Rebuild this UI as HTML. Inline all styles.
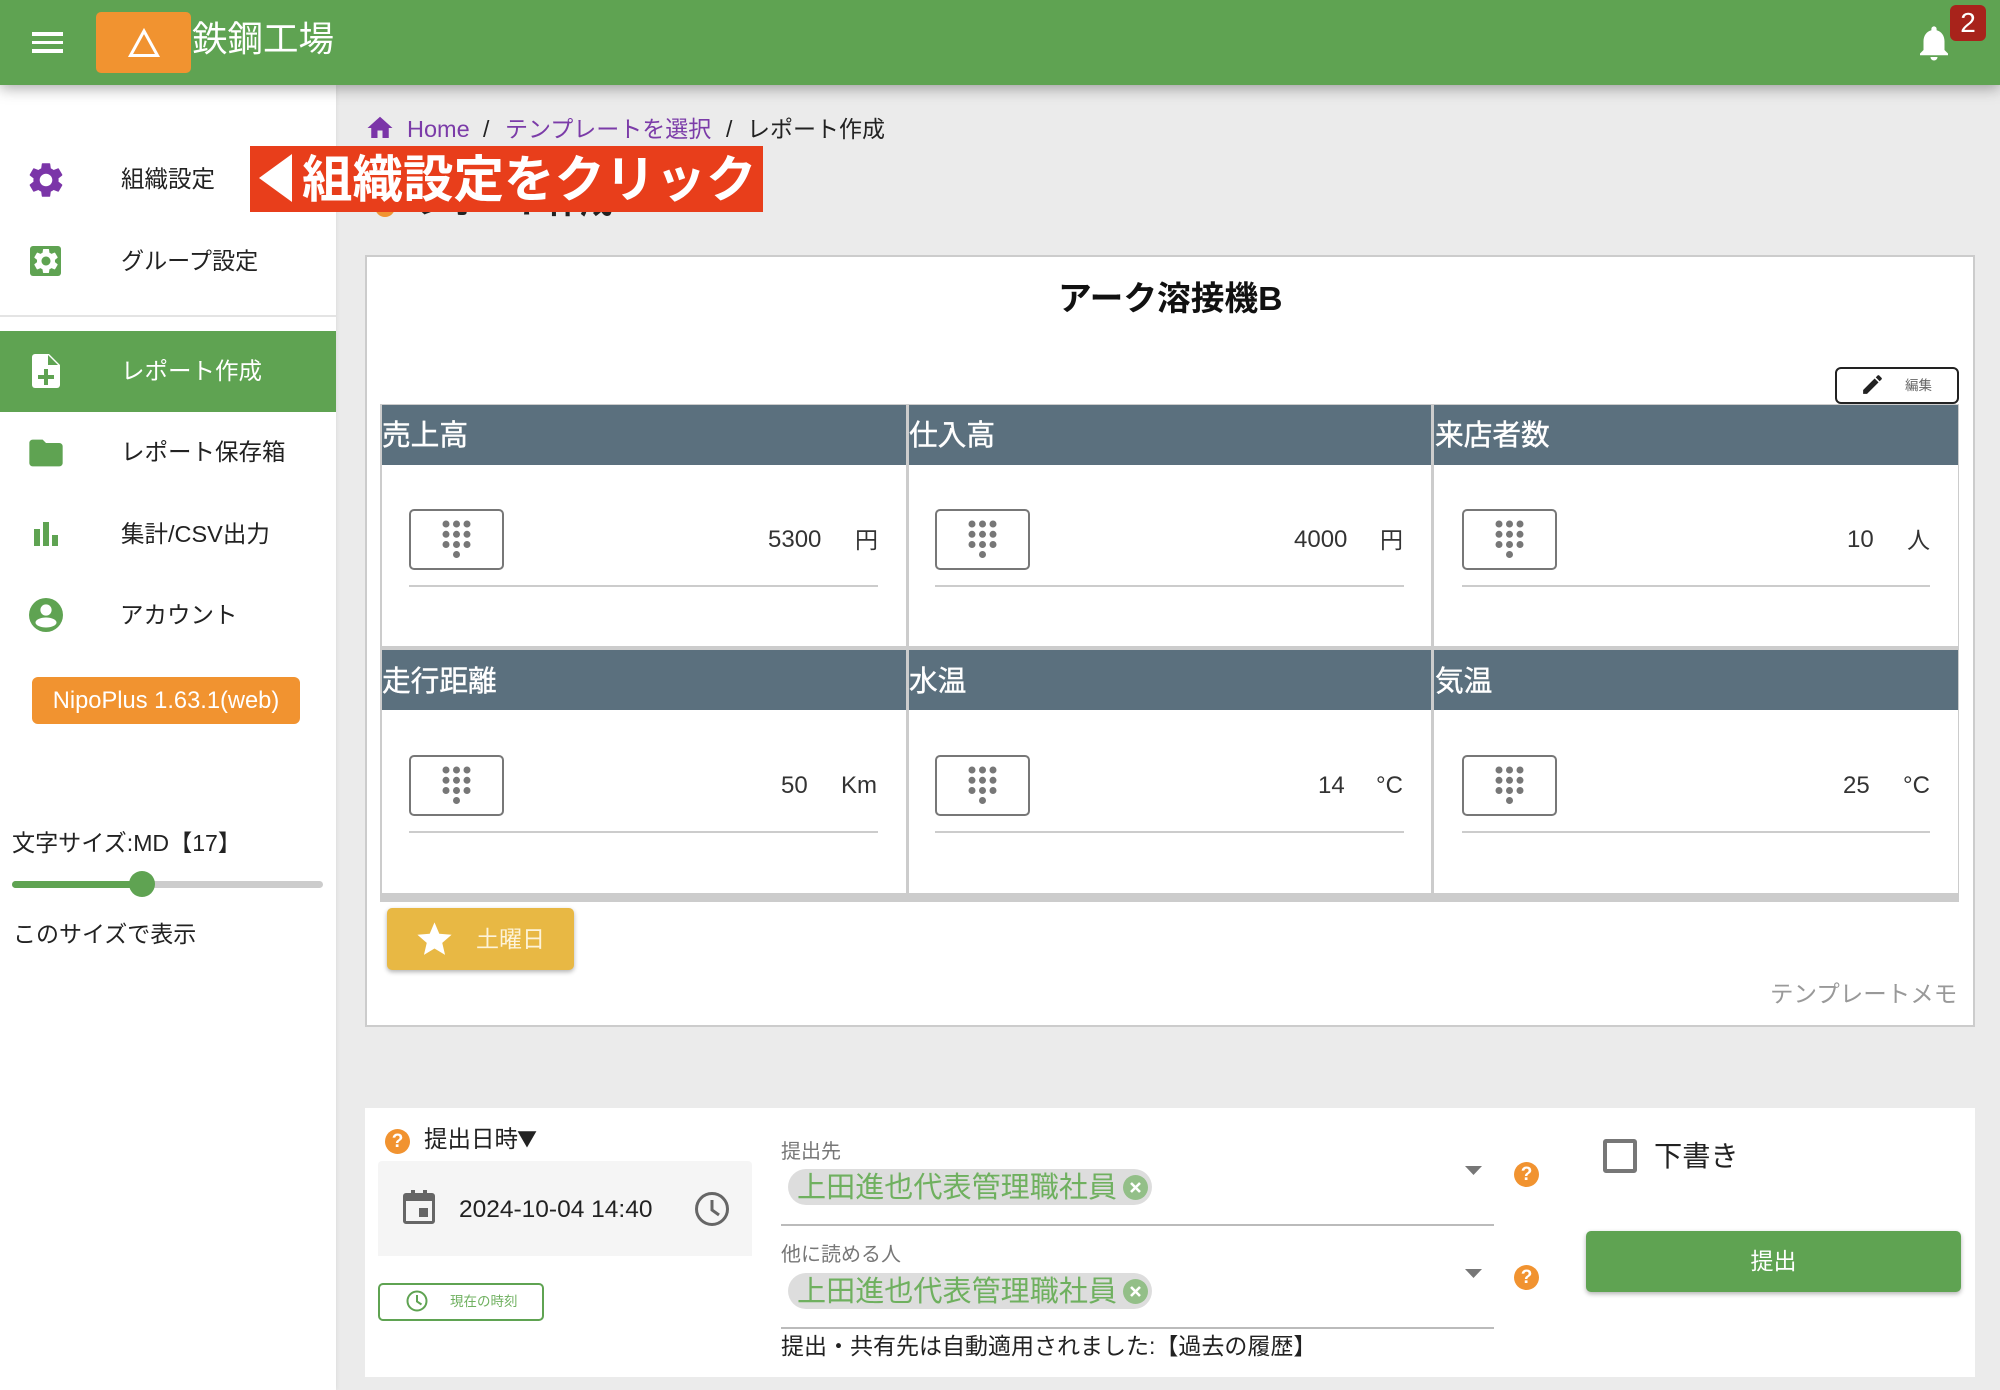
<!DOCTYPE html>
<html lang="ja"><head><meta charset="utf-8"><title>レポート作成</title>
<style>
html,body{margin:0;padding:0}
body{width:2000px;height:1390px;position:relative;overflow:hidden;background:#ebebeb;font-family:"Liberation Sans","Noto Sans CJK JP",sans-serif;color:#222}
.a{position:absolute;display:block;box-sizing:border-box}
.t{position:absolute;white-space:nowrap;line-height:40px;height:40px}
svg{position:absolute;display:block}
.h{background:#5b707e;height:60px;width:526px}
.hl{color:#fff;font-size:28.7px;-webkit-text-stroke:.4px #fff}
.dial{border:2px solid #777;border-radius:5px;width:95px;height:61px;background:#fff}
.u{height:2px;background:#ccc;width:469px}
.v{font-size:24px;color:#333}
.chip{background:#ddd;border-radius:18px;height:36px;width:364px}
.q{width:25px;height:25px;border-radius:50%;background:#f19330;color:#fff;font-size:19px;font-weight:700;text-align:center;line-height:25px}
</style></head><body>

<!-- sidebar -->
<div class="a" style="left:0;top:85px;width:336px;height:1305px;background:#fff;box-shadow:1px 0 4px rgba(0,0,0,.06)"></div>

<!-- breadcrumb -->
<svg style="left:365px;top:113px" width="30" height="30" viewBox="0 0 24 24"><path fill="#7b35a8" d="M10 20v-6h4v6h5v-8h3L12 3 2 12h3v8z"/></svg>
<span class="t" style="left:407px;top:109px;font-size:23.5px;color:#7b3ba8">Home</span>
<span class="t" style="left:483px;top:109px;font-size:23px">/</span>
<span class="t" style="left:505px;top:109px;font-size:23px;color:#7b3ba8">テンプレートを選択</span>
<span class="t" style="left:726px;top:109px;font-size:23px">/</span>
<span class="t" style="left:747px;top:109px;font-size:23px">レポート作成</span>

<!-- hidden title behind banner -->
<div class="a" style="left:375px;top:197px;width:20px;height:20px;border-radius:50%;background:#f19330"></div>
<span class="t" style="left:415px;top:182px;font-size:33px;font-weight:700;color:#222">レポート作成</span>

<!-- sidebar items -->
<svg style="left:25px;top:159px" width="42" height="42" viewBox="0 0 24 24"><path fill="#7b35a8" d="M19.14 12.94c.04-.3.06-.61.06-.94 0-.32-.02-.64-.07-.94l2.03-1.58c.18-.14.23-.41.12-.61l-1.92-3.32c-.12-.22-.37-.29-.59-.22l-2.39.96c-.5-.38-1.03-.7-1.62-.94l-.36-2.54c-.04-.24-.24-.41-.48-.41h-3.84c-.24 0-.43.17-.47.41l-.36 2.54c-.59.24-1.13.57-1.62.94l-2.39-.96c-.22-.08-.47 0-.59.22L2.74 8.87c-.12.21-.08.47.12.61l2.03 1.58c-.05.3-.09.63-.09.94s.02.64.07.94l-2.03 1.58c-.18.14-.23.41-.12.61l1.92 3.32c.12.22.37.29.59.22l2.39-.96c.5.38 1.03.7 1.62.94l.36 2.54c.05.24.24.41.48.41h3.84c.24 0 .44-.17.47-.41l.36-2.54c.59-.24 1.13-.56 1.62-.94l2.39.96c.22.08.47 0 .59-.22l1.92-3.32c.12-.22.07-.47-.12-.61l-2.01-1.58zM12 15.6c-1.98 0-3.6-1.62-3.6-3.6s1.62-3.6 3.6-3.6 3.6 1.62 3.6 3.6-1.62 3.6-3.6 3.6z"/></svg>
<span class="t" style="left:121px;top:159px;font-size:23.5px">組織設定</span>

<div class="a" style="left:30px;top:246px;width:31px;height:30px;background:#5fa352;border-radius:3px"></div>
<svg style="left:31px;top:246px" width="30" height="30" viewBox="0 0 24 24"><path fill="#fff" d="M19.14 12.94c.04-.3.06-.61.06-.94 0-.32-.02-.64-.07-.94l2.03-1.58c.18-.14.23-.41.12-.61l-1.92-3.32c-.12-.22-.37-.29-.59-.22l-2.39.96c-.5-.38-1.03-.7-1.62-.94l-.36-2.54c-.04-.24-.24-.41-.48-.41h-3.84c-.24 0-.43.17-.47.41l-.36 2.54c-.59.24-1.13.57-1.62.94l-2.39-.96c-.22-.08-.47 0-.59.22L2.74 8.87c-.12.21-.08.47.12.61l2.03 1.58c-.05.3-.09.63-.09.94s.02.64.07.94l-2.03 1.58c-.18.14-.23.41-.12.61l1.92 3.32c.12.22.37.29.59.22l2.39-.96c.5.38 1.03.7 1.62.94l.36 2.54c.05.24.24.41.48.41h3.84c.24 0 .44-.17.47-.41l.36-2.54c.59-.24 1.13-.56 1.62-.94l2.39.96c.22.08.47 0 .59-.22l1.92-3.32c.12-.22.07-.47-.12-.61l-2.01-1.58zM12 15.6c-1.98 0-3.6-1.62-3.6-3.6s1.62-3.6 3.6-3.6 3.6 1.62 3.6 3.6-1.62 3.6-3.6 3.6z"/></svg>
<span class="t" style="left:121px;top:241px;font-size:23.1px">グループ設定</span>

<div class="a" style="left:0;top:315px;width:336px;height:2px;background:#e4e4e4"></div>
<div class="a" style="left:0;top:331px;width:336px;height:81px;background:#5fa352"></div>
<svg style="left:32px;top:354px" width="28" height="34" viewBox="0 0 28 34"><path fill="#fff" d="M3 0h14l11 11v20a3 3 0 0 1-3 3H3a3 3 0 0 1-3-3V3a3 3 0 0 1 3-3z"/><path fill="#5fa352" d="M16 2v10h10zM12 16h4v6h6v4h-6v6h-4v-6H6v-4h6z" transform="translate(0 -1) "/></svg>
<span class="t" style="left:121px;top:351px;font-size:23.5px;color:#fff">レポート作成</span>

<svg style="left:26px;top:433px" width="40" height="40" viewBox="0 0 24 24" preserveAspectRatio="none"><path fill="#5fa352" d="M10 4H4c-1.1 0-1.99.9-1.99 2L2 18c0 1.1.9 2 2 2h16c1.1 0 2-.9 2-2V8c0-1.1-.9-2-2-2h-8l-2-2z"/></svg>
<span class="t" style="left:121px;top:432px;font-size:23.5px">レポート保存箱</span>

<div class="a" style="left:34px;top:529px;width:6px;height:17px;background:#5fa352"></div>
<div class="a" style="left:43px;top:522px;width:6px;height:24px;background:#5fa352"></div>
<div class="a" style="left:52px;top:535px;width:6px;height:11px;background:#5fa352"></div>
<span class="t" style="left:121px;top:514px;font-size:23.5px">集計/CSV出力</span>

<svg style="left:29px;top:598px" width="34" height="34" viewBox="0 0 34 34"><circle cx="17" cy="17" r="17" fill="#5fa352"/><circle cx="17" cy="12" r="5.6" fill="#fff"/><ellipse cx="17" cy="24.5" rx="10.5" ry="5" fill="#fff"/></svg>
<span class="t" style="left:120px;top:595px;font-size:23.5px">アカウント</span>

<div class="a" style="left:32px;top:677px;width:268px;height:47px;background:#f19330;border-radius:6px;color:#fff;font-size:23.7px;line-height:49px;text-align:center">NipoPlus 1.63.1(web)</div>

<span class="t" style="left:12px;top:823px;font-size:23.1px">文字サイズ:MD【17】</span>
<div class="a" style="left:12px;top:881px;width:311px;height:7px;background:#ccc;border-radius:4px"></div>
<div class="a" style="left:12px;top:881px;width:130px;height:7px;background:#5fa352;border-radius:4px"></div>
<div class="a" style="left:129px;top:871px;width:26px;height:26px;background:#5fa352;border-radius:50%"></div>
<span class="t" style="left:13px;top:914px;font-size:23px">このサイズで表示</span>

<!-- main card -->
<div class="a" style="left:365px;top:255px;width:1610px;height:772px;background:#fff;border:2px solid #ccc"></div>
<span class="t" style="left:1058px;top:279px;font-size:33.7px;font-weight:700;color:#111">アーク溶接機B</span>

<!-- edit -->
<div class="a" style="left:1835px;top:367px;width:124px;height:37px;border:2px solid #222;border-radius:6px;background:#fff;z-index:2"></div>
<svg style="left:1860px;top:372px;z-index:3" width="25" height="25" viewBox="0 0 24 24"><path fill="#222" d="M3 17.25V21h3.75L17.81 9.94l-3.75-3.75L3 17.25zM20.71 7.04c.39-.39.39-1.02 0-1.41l-2.34-2.34c-.39-.39-1.02-.39-1.41 0l-1.83 1.83 3.75 3.75 1.83-1.83z"/></svg>
<span class="t" style="left:1905px;top:366px;font-size:13.5px;color:#666;z-index:3">編集</span>

<!-- grid -->
<div class="a" style="left:380px;top:404px;width:1579px;height:498px;background:#ccc"></div>
<div class="a" style="left:382px;top:405px;width:524px;height:241px;background:#fff"></div>
<div class="a" style="left:909px;top:405px;width:522px;height:241px;background:#fff"></div>
<div class="a" style="left:1434px;top:405px;width:524px;height:241px;background:#fff"></div>
<div class="a" style="left:382px;top:650px;width:524px;height:243px;background:#fff"></div>
<div class="a" style="left:909px;top:650px;width:522px;height:243px;background:#fff"></div>
<div class="a" style="left:1434px;top:650px;width:524px;height:243px;background:#fff"></div>

<div class="a h" style="left:382px;top:405px;width:524px"></div>
<div class="a h" style="left:909px;top:405px;width:522px"></div>
<div class="a h" style="left:1434px;top:405px;width:524px"></div>
<div class="a h" style="left:382px;top:650px;width:524px"></div>
<div class="a h" style="left:909px;top:650px;width:522px"></div>
<div class="a h" style="left:1434px;top:650px;width:524px"></div>

<span class="t hl" style="left:382px;top:416px">売上高</span>
<span class="t hl" style="left:909px;top:416px">仕入高</span>
<span class="t hl" style="left:1435px;top:416px">来店者数</span>
<span class="t hl" style="left:382px;top:662px">走行距離</span>
<span class="t hl" style="left:909px;top:662px">水温</span>
<span class="t hl" style="left:1435px;top:662px">気温</span>

<svg width="0" height="0" style="position:absolute"><defs><g id="dots" fill="#777"><circle cx="-10.5" cy="0" r="3.5"/><circle cx="0" cy="0" r="3.5"/><circle cx="10.5" cy="0" r="3.5"/><circle cx="-10.5" cy="10.3" r="3.5"/><circle cx="0" cy="10.3" r="3.5"/><circle cx="10.5" cy="10.3" r="3.5"/><circle cx="-10.5" cy="20.5" r="3.5"/><circle cx="0" cy="20.5" r="3.5"/><circle cx="10.5" cy="20.5" r="3.5"/><circle cx="0" cy="30.5" r="3.5"/></g></defs></svg>

<div class="a dial" style="left:409px;top:509px"></div><div class="a dial" style="left:935px;top:509px"></div><div class="a dial" style="left:1462px;top:509px"></div>
<div class="a dial" style="left:409px;top:755px"></div><div class="a dial" style="left:935px;top:755px"></div><div class="a dial" style="left:1462px;top:755px"></div>
<svg style="left:0;top:0" width="2000" height="1000"><use href="#dots" x="456.5" y="524"/><use href="#dots" x="982.5" y="524"/><use href="#dots" x="1509.5" y="524"/><use href="#dots" x="456.5" y="770"/><use href="#dots" x="982.5" y="770"/><use href="#dots" x="1509.5" y="770"/></svg>
<div class="a u" style="left:409px;top:585px"></div><div class="a u" style="left:935px;top:585px"></div><div class="a u" style="left:1462px;top:585px;width:468px"></div>
<div class="a u" style="left:409px;top:831px"></div><div class="a u" style="left:935px;top:831px"></div><div class="a u" style="left:1462px;top:831px;width:468px"></div>

<span class="t v" style="left:768px;top:520px">5300</span><span class="t v" style="left:855px;top:520px;font-size:23px">円</span>
<span class="t v" style="left:1294px;top:520px">4000</span><span class="t v" style="left:1380px;top:520px;font-size:23px">円</span>
<span class="t v" style="left:1847px;top:520px">10</span><span class="t v" style="left:1907px;top:520px;font-size:23px">人</span>
<span class="t v" style="left:781px;top:766px">50</span><span class="t v" style="left:841px;top:766px">Km</span>
<span class="t v" style="left:1318px;top:766px">14</span><span class="t v" style="left:1376px;top:766px">°C</span>
<span class="t v" style="left:1843px;top:766px">25</span><span class="t v" style="left:1903px;top:766px">°C</span>

<!-- star button -->
<div class="a" style="left:387px;top:908px;width:187px;height:62px;background:#e8b844;border-radius:5px;box-shadow:0 2px 5px rgba(0,0,0,.3)"></div>
<svg style="left:414px;top:919px" width="41" height="41" viewBox="0 0 24 24"><path fill="#fff" d="M12 17.27L18.18 21l-1.64-7.03L22 9.24l-7.19-.61L12 2 9.19 8.63 2 9.24l5.46 4.73L5.82 21z"/></svg>
<span class="t" style="left:476px;top:919px;font-size:23px;color:#fdf3d9">土曜日</span>

<span class="t" style="left:1770px;top:974px;font-size:23.5px;color:#999">テンプレートメモ</span>

<!-- bottom panel -->
<div class="a" style="left:365px;top:1108px;width:1610px;height:269px;background:#fff"></div>
<div class="a q" style="left:385px;top:1129px">?</div>
<span class="t" style="left:424px;top:1119px;font-size:23.5px">提出日時</span>
<span class="t" style="left:517px;top:1118px;font-size:20px;font-family:'Noto Sans CJK JP',sans-serif">▼</span>
<div class="a" style="left:378px;top:1161px;width:374px;height:95px;background:#f5f5f5;border-radius:4px 4px 0 0"></div>
<svg style="left:403px;top:1190px" width="32" height="34" viewBox="0 0 32 34"><path fill="#666" d="M3 3h5V0h4v3h8V0h4v3h5a3 3 0 0 1 3 3v25a3 3 0 0 1-3 3H3a3 3 0 0 1-3-3V6a3 3 0 0 1 3-3z"/><rect x="3" y="11" width="26" height="20" fill="#f5f5f5"/><rect x="16" y="18" width="9" height="9" fill="#666"/></svg>
<span class="t" style="left:459px;top:1190px;font-size:24.5px">2024-10-04 14:40</span>
<svg style="left:695px;top:1192px" width="34" height="34" viewBox="0 0 34 34"><circle cx="17" cy="17" r="15.5" fill="none" stroke="#666" stroke-width="3"/><path d="M17 8v10l7 5" fill="none" stroke="#666" stroke-width="3"/></svg>
<div class="a" style="left:378px;top:1283px;width:166px;height:38px;border:2px solid #5fa352;border-radius:5px"></div>
<svg style="left:406px;top:1290px" width="22" height="22" viewBox="0 0 22 22"><circle cx="11" cy="11" r="9.5" fill="none" stroke="#5fa352" stroke-width="2"/><path d="M11 5v6.5l4.5 3" fill="none" stroke="#5fa352" stroke-width="2"/></svg>
<span class="t" style="left:450px;top:1282px;font-size:13.5px;color:#6fb05f">現在の時刻</span>

<span class="t" style="left:781px;top:1132px;font-size:20px;color:#777">提出先</span>
<div class="a chip" style="left:788px;top:1169px"></div>
<span class="t" style="left:797px;top:1168px;font-size:29.1px;color:#6fb05f">上田進也代表管理職社員</span>
<svg style="left:1123px;top:1175px" width="25" height="25" viewBox="0 0 25 25"><circle cx="12.5" cy="12.5" r="12.5" fill="#93bf88"/><path d="M8 8l9 9M17 8l-9 9" stroke="#fff" stroke-width="2.6"/></svg>
<div class="a" style="left:781px;top:1224px;width:713px;height:2px;background:#bbb"></div>
<svg style="left:1465px;top:1166px" width="17" height="9" viewBox="0 0 17 9"><path d="M0 0h17l-8.5 9z" fill="#777"/></svg>
<div class="a q" style="left:1514px;top:1162px">?</div>

<span class="t" style="left:781px;top:1235px;font-size:20px;color:#777">他に読める人</span>
<div class="a chip" style="left:788px;top:1273px"></div>
<span class="t" style="left:797px;top:1272px;font-size:29.1px;color:#6fb05f">上田進也代表管理職社員</span>
<svg style="left:1123px;top:1279px" width="25" height="25" viewBox="0 0 25 25"><circle cx="12.5" cy="12.5" r="12.5" fill="#93bf88"/><path d="M8 8l9 9M17 8l-9 9" stroke="#fff" stroke-width="2.6"/></svg>
<div class="a" style="left:781px;top:1327px;width:713px;height:2px;background:#bbb"></div>
<svg style="left:1465px;top:1269px" width="17" height="9" viewBox="0 0 17 9"><path d="M0 0h17l-8.5 9z" fill="#777"/></svg>
<div class="a q" style="left:1514px;top:1265px">?</div>

<span class="t" style="left:781px;top:1326px;font-size:23px">提出・共有先は自動適用されました:【過去の履歴】</span>

<div class="a" style="left:1603px;top:1139px;width:34px;height:34px;border:4px solid #777;border-radius:3px"></div>
<span class="t" style="left:1654px;top:1136px;font-size:28.2px">下書き</span>
<div class="a" style="left:1586px;top:1231px;width:375px;height:61px;background:#5fa352;border-radius:5px;box-shadow:0 2px 5px rgba(0,0,0,.3);color:#fff;font-size:23px;line-height:61px;text-align:center">提出</div>

<!-- header -->
<div class="a" style="left:0;top:0;width:2000px;height:85px;background:#5fa352;box-shadow:0 3px 14px rgba(0,0,0,.35);z-index:5"></div>
<div class="a" style="left:32px;top:32px;width:31px;height:4px;background:#fff;z-index:6"></div>
<div class="a" style="left:32px;top:41px;width:31px;height:3px;background:#fff;z-index:6"></div>
<div class="a" style="left:32px;top:49px;width:31px;height:4px;background:#fff;z-index:6"></div>
<div class="a" style="left:96px;top:12px;width:95px;height:61px;background:#f19330;border-radius:5px;z-index:6"></div>
<svg style="left:127px;top:28px;z-index:7" width="34" height="30" viewBox="0 0 34 30"><path d="M17 3L3.5 27.5h27z" fill="none" stroke="#fff" stroke-width="3"/></svg>
<span class="t" style="left:192px;top:19px;font-size:35.5px;color:#fff;z-index:6">鉄鋼工場</span>
<svg style="left:1913px;top:22px;z-index:6" width="42" height="42" viewBox="0 0 24 24"><path fill="#fff" d="M12 22c1.1 0 2-.9 2-2h-4c0 1.1.89 2 2 2zm6-6v-5c0-3.07-1.64-5.64-4.5-6.32V4c0-.83-.67-1.5-1.5-1.5s-1.5.67-1.5 1.5v.68C7.63 5.36 6 7.92 6 11v5l-2 2v1h16v-1l-2-2z"/></svg>
<div class="a" style="left:1950px;top:5px;width:36px;height:36px;background:#a8231b;border-radius:6px;color:#fff;font-size:28px;line-height:36px;text-align:center;z-index:6">2</div>

<!-- red banner -->
<div class="a" style="left:250px;top:146px;width:513px;height:66px;background:#e83e1b;z-index:8"></div>
<svg style="left:259px;top:154px;z-index:9" width="33" height="48" viewBox="0 0 33 48"><path d="M33 0v48L0 24z" fill="#fff"/></svg>
<span class="t" style="left:302px;top:160px;font-size:50.5px;line-height:40px;font-weight:700;color:#fff;z-index:9">組織設定をクリック</span>
</body></html>
